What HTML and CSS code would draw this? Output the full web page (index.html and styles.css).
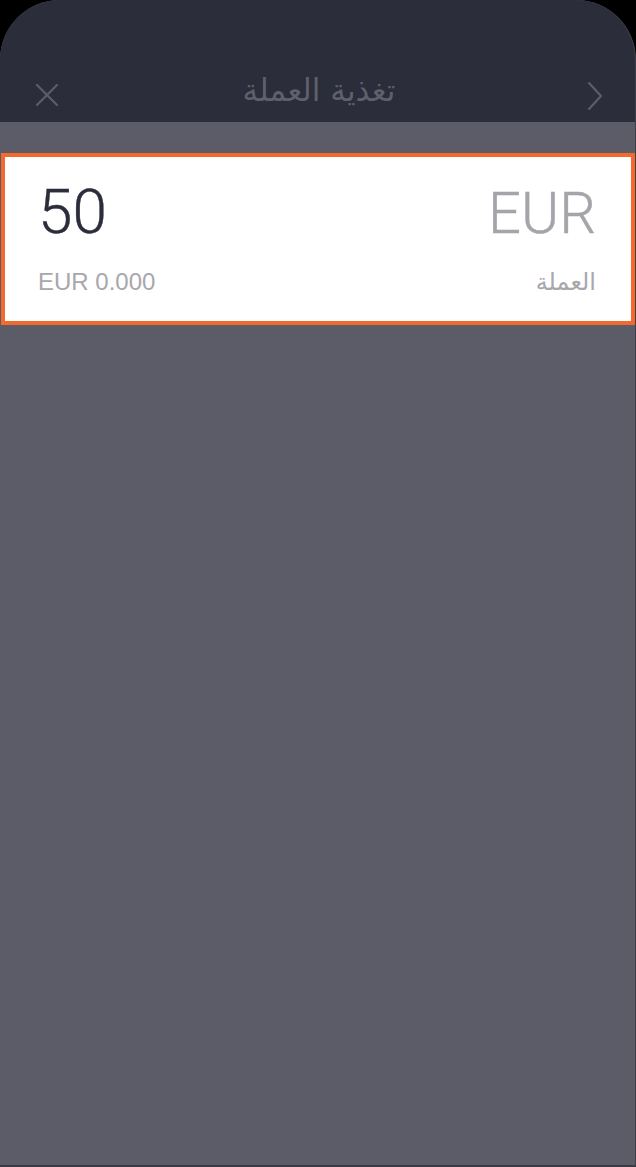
FILE: index.html
```html
<!DOCTYPE html>
<html lang="ar">
<head>
<meta charset="utf-8">
<title>تغذية العملة</title>
<link rel="stylesheet" href="styles.css">
</head>
<body>
<div class="screen">
  <header class="topbar">
    <button class="icon-btn close" aria-label="close">
      <svg width="22" height="22" viewBox="0 0 22 22"><path d="M1 1 L21 21 M21 1 L1 21" stroke="#5b5d6a" stroke-width="2.2" fill="none" stroke-linecap="round"/></svg>
    </button>
    <h1 class="title" dir="rtl">تغذية العملة</h1>
    <button class="icon-btn next" aria-label="next">
      <svg width="18" height="28" viewBox="0 0 18 28"><path d="M3 1 L15 14 L3 27" stroke="#5b5d6a" stroke-width="2.2" fill="none" stroke-linecap="round" stroke-linejoin="round"/></svg>
    </button>
  </header>
  <main class="content">
    <section class="card">
      <div class="row main-row">
        <span class="amount">50</span>
        <span class="currency">EUR</span>
      </div>
      <div class="row sub-row">
        <span class="balance">EUR 0.000</span>
        <span class="label" dir="rtl">العملة</span>
      </div>
    </section>
  </main>
</div>
</body>
</html>
```

FILE: styles.css
```css
* { box-sizing: border-box; }
html, body {
  margin: 0;
  padding: 0;
  background: #000;
}
body {
  font-family: Roboto, "DejaVu Sans", sans-serif;
}
.screen {
  width: 636px;
  height: 1167px;
  background: #5c5c68;
  border-radius: 60px 60px 0 0;
  overflow: hidden;
  display: flex;
  flex-direction: column;
  border-right: 1px solid #3f3f48;
  border-bottom: 2px solid #3a3a44;
}
.topbar {
  height: 122px;
  flex: none;
  background: #2b2d3a;
  display: flex;
  align-items: flex-start;
  justify-content: space-between;
  padding: 68px 31px 0 36px;
}
.icon-btn {
  background: none;
  border: 0;
  padding: 0;
  margin: 0;
  display: flex;
  line-height: 0;
}
.close { margin-top: 16px; }
.next { margin-top: 14px; }
.title {
  margin: 0;
  font-family: "DejaVu Sans", sans-serif;
  font-weight: 400;
  font-size: 31px;
  line-height: 44px;
  color: #5e606c;
  margin-left: -6px;
}
.content {
  flex: 1;
  padding: 31px 0 0 1px;
}
.card {
  background: #fff;
  border: 4px solid #f36a2c;
  padding: 24px 35px 27px 33px;
  display: flex;
  flex-direction: column;
  gap: 26px;
}
.row {
  display: flex;
  justify-content: space-between;
  align-items: baseline;
}
.amount {
  font-size: 62px;
  line-height: 62px;
  font-weight: 300;
  color: #2b2d3a;
  -webkit-text-stroke: 0.4px #2b2d3a;
}
.currency {
  font-size: 58px;
  line-height: 62px;
  font-weight: 300;
  color: #a4a4aa;
  -webkit-text-stroke: 0.4px #a4a4aa;
}
.balance {
  font-family: "Liberation Sans", Arial, sans-serif;
  font-size: 24px;
  line-height: 23px;
  color: #a7a7ac;
}
.label {
  font-family: "DejaVu Sans", sans-serif;
  font-size: 24px;
  line-height: 23px;
  color: #a7a7ac;
}
```
